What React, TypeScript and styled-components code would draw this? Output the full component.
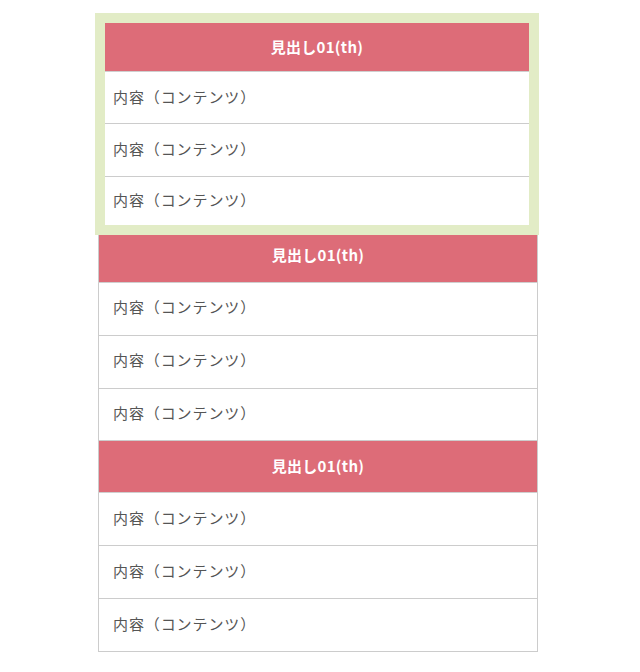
import React from "react";
import styled, { createGlobalStyle } from "styled-components";

const Global = createGlobalStyle`
  html, body { margin: 0; padding: 0; background: #ffffff; }
  body { font-family: "Noto Sans CJK JP", "Noto Sans", sans-serif; }
`;

const Page = styled.div`
  width: 640px;
  height: 672px;
  padding-top: 13px;
  box-sizing: border-box;
  display: flex;
  flex-direction: column;
  align-items: flex-start;
`;

const Highlight = styled.div`
  margin-left: 95px;
  width: 444px;
  padding: 10px;
  box-sizing: border-box;
  background: #e2ecc6;
`;

const Table = styled.table<{ $framed?: boolean }>`
  border-collapse: collapse;
  width: ${(p) => (p.$framed ? "440px" : "424px")};
  margin-left: ${(p) => (p.$framed ? "98px" : "0")};
  background: #ffffff;
  table-layout: fixed;
`;

const Th = styled.th<{ $h: number; $shift?: number; $framed?: boolean }>`
  height: ${(p) => p.$h}px;
  padding: 0 0 ${(p) => p.$shift ?? 1}px 0;
  box-sizing: border-box;
  background: #dd6c78;
  color: #ffffff;
  font-family: "Noto Sans CJK JP", "Noto Sans", sans-serif;
  font-weight: 700;
  font-size: 15px;
  letter-spacing: 0.02em;
  text-align: center;
  vertical-align: middle;
  border-bottom: 1px solid #cfcfcf;
  border-left: ${(p) => (p.$framed ? "1px solid #cccccc" : "none")};
  border-right: ${(p) => (p.$framed ? "1px solid #cccccc" : "none")};
`;

const Td = styled.td<{ $h: number; $framed?: boolean; $last?: boolean }>`
  height: ${(p) => p.$h}px;
  padding: 0 0 ${(p) => (p.$framed ? 4 : 2)}px ${(p) => (p.$framed ? 14 : 8)}px;
  box-sizing: border-box;
  color: #555555;
  font-family: "Noto Sans CJK JP", "Noto Sans", sans-serif;
  font-weight: 400;
  font-size: 15px;
  letter-spacing: 0.06em;
  text-align: left;
  vertical-align: middle;
  border-bottom: ${(p) => (p.$last ? "none" : "1px solid #cccccc")};
  border-left: ${(p) => (p.$framed ? "1px solid #cccccc" : "none")};
  border-right: ${(p) => (p.$framed ? "1px solid #cccccc" : "none")};
`;

const HEAD = "見出し01(th)";
const BODY = "内容（コンテンツ）";

function FramedTable({ headH, rows, shift }: { headH: number; rows: number[]; shift?: number }) {
  return (
    <Table $framed>
      <thead>
        <tr>
          <Th $h={headH} $shift={shift} $framed>
            {HEAD}
          </Th>
        </tr>
      </thead>
      <tbody>
        {rows.map((h, i) => (
          <tr key={i}>
            <Td $h={h} $framed>
              {BODY}
            </Td>
          </tr>
        ))}
      </tbody>
    </Table>
  );
}

export default function App() {
  const firstRows = [52, 53, 49];
  return (
    <>
      <Global />
      <Page>
        <Highlight>
          <Table>
            <thead>
              <tr>
                <Th $h={48} $shift={0}>{HEAD}</Th>
              </tr>
            </thead>
            <tbody>
              {firstRows.map((h, i) => (
                <tr key={i}>
                  <Td $h={h} $last={i === firstRows.length - 1}>
                    {BODY}
                  </Td>
                </tr>
              ))}
            </tbody>
          </Table>
        </Highlight>
        <FramedTable headH={47} rows={[53, 53, 52]} shift={7} />
        <FramedTable headH={52} rows={[53, 53, 53]} />
      </Page>
    </>
  );
}
